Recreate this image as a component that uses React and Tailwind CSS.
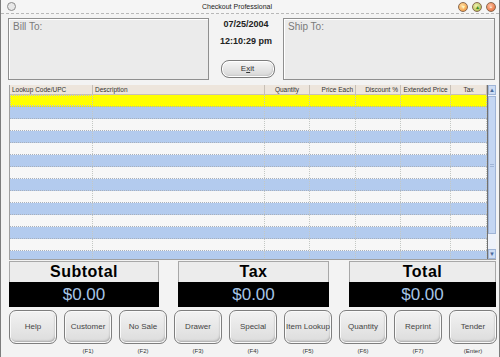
import React from "react";

const columns = [
  { label: "Lookup Code/UPC", align: "text-left pl-[2px]" },
  { label: "Description", align: "text-left pl-[2px]" },
  { label: "Quantity", align: "text-center" },
  { label: "Price Each", align: "text-right pr-[2px]" },
  { label: "Discount %", align: "text-right pr-[2px]" },
  { label: "Extended Price", align: "text-center" },
  { label: "Tax", align: "text-center" },
];

const buttons = [
  { label: "Help", key: "" },
  { label: "Customer", key: "(F1)" },
  { label: "No Sale", key: "(F2)" },
  { label: "Drawer", key: "(F3)" },
  { label: "Special", key: "(F4)" },
  { label: "Item Lookup", key: "(F5)" },
  { label: "Quantity", key: "(F6)" },
  { label: "Reprint", key: "(F7)" },
  { label: "Tender", key: "(Enter)" },
];

const rows = Array.from({ length: 14 }, (_, i) => i);

const rowColor = (i) => {
  if (i === 0) return "bg-[#ffff00]";
  return i % 2 === 1 ? "bg-[#b3cbee]" : "bg-[#f7f7f7]";
};

const Ball = ({ color, children }) => (
  <div
    className={`w-[10px] h-[10px] rounded-full border border-[#8a6a50] flex items-center justify-center text-[6px] leading-none text-white ${color}`}
  >
    {children}
  </div>
);

const InfoBox = ({ label, className }) => (
  <div
    className={`h-[62px] border border-[#8f8f8f] bg-[#ebebeb] shadow-[inset_1px_1px_0_#fff] px-[4px] pt-[2px] text-[10px] leading-[12px] text-[#7a7a7a] ${className}`}
  >
    {label}
  </div>
);

const TotalPanel = ({ title, className }) => (
  <div className={`flex flex-col ${className}`}>
    <div className="h-[21px] bg-[#ececec] border-t border-l border-r border-[#a8a8a8] flex items-center justify-center">
      <span className="text-[16px] font-bold tracking-[0.5px] text-black leading-none">
        {title}
      </span>
    </div>
    <div className="h-[25px] bg-black flex items-center justify-center">
      <span className="text-[17px] text-[#a6c4e6] leading-none">$0.00</span>
    </div>
  </div>
);

export default function App() {
  return (
    <div
      className="w-[500px] h-[357px] bg-[#f3f3f3] border-l border-r border-[#7d7d7d] flex flex-col overflow-hidden"
      style={{ fontFamily: '"Liberation Sans", Arial, sans-serif' }}
    >
      {/* title bar */}
      <div className="h-[14px] shrink-0 flex items-center px-[3px] border-b border-dashed border-[#b8b8b8] bg-[#f5f5f5]">
        <div className="w-[9px] h-[9px] rounded-full border border-[#8a8a8a] bg-[#e8e8e8] ml-[3px]" />
        <div className="flex-1 text-center text-[7px] leading-[14px] text-[#222]">
          Checkout Professional
        </div>
        <div className="flex gap-[4px] items-center">
          <Ball color="bg-[radial-gradient(circle_at_40%_35%,#ffe0a0,#f08a30)]">
            <span className="text-[#fff6c0]">▾</span>
          </Ball>
          <Ball color="bg-[radial-gradient(circle_at_40%_35%,#f2f2b0,#9ab040)]">
            <span className="text-[#3c8c20]">▴</span>
          </Ball>
          <Ball color="bg-[radial-gradient(circle_at_40%_35%,#ffc0a0,#e0602a)]">
            <span className="text-[#fff0e0]">•</span>
          </Ball>
        </div>
      </div>

      {/* bill / ship */}
      <div className="mt-[4px] flex pl-[7px] pr-[4px] shrink-0">
        <InfoBox label="Bill To:" className="w-[201px]" />
        <div className="w-[74px] flex flex-col items-center">
          <div className="mt-[1px] h-[11px] text-[9px] font-bold text-[#222] leading-[11px]">
            07/25/2004
          </div>
          <div className="mt-[6px] h-[11px] text-[9px] font-bold text-[#222] leading-[11px]">
            12:10:29 pm
          </div>
          <div className="mt-[13px] ml-[3px] w-[54px] h-[18px] rounded-[8px] border border-[#7c7c7c] bg-[linear-gradient(#f6f6f6,#d6d6d6)] shadow-[inset_0_0_0_1px_#fff,inset_-1px_-1px_2px_#aaa] flex items-center justify-center text-[8px] leading-none text-[#333]">
            E<span className="underline">x</span>it
          </div>
        </div>
        <InfoBox label="Ship To:" className="flex-1" />
      </div>

      {/* grid */}
      <div className="mt-[5px] ml-[8px] mr-[3px] h-[175px] flex shrink-0 border-l border-b border-[#a0a0a0] overflow-hidden">
        <div className="w-[477px] flex flex-col">
          <div className="h-[10px] shrink-0 grid grid-cols-[83px_172px_45px_46px_45px_50px_36px] bg-[#ede5dc] border-b border-[#c8c0b8]">
            {columns.map((c) => (
              <div
                key={c.label}
                className={`border-r border-[#c6beb5] text-[6.5px] leading-[9px] text-[#333] whitespace-nowrap overflow-hidden ${c.align}`}
              >
                {c.label}
              </div>
            ))}
          </div>
          {rows.map((r) => (
            <div
              key={r}
              className={`h-[12px] shrink-0 grid grid-cols-[83px_172px_45px_46px_45px_50px_36px] border-b border-dotted border-[#a8b0bc] ${rowColor(r)}`}
            >
              {columns.map((c, ci) => (
                <div
                  key={c.label}
                  className={`border-r border-dotted border-[#c4c8c4] ${
                    r === 0 && ci === 0 ? "border border-dotted border-[#777]" : ""
                  }`}
                />
              ))}
            </div>
          ))}
        </div>
        {/* scrollbar */}
        <div className="w-[12px] flex flex-col bg-[#eef2fa] border-l border-[#707070]">
          <div className="h-[10px] bg-[#cddcf3] border border-[#9fb4d6] flex items-center justify-center text-[6px] text-[#4a6a9a] leading-none">
            ▲
          </div>
          <div className="h-[138px] mt-[1px] bg-[#c4d6f2] border border-[#9fb4d6] flex items-center justify-center">
            <div className="w-[4px] h-[3px] border-t border-b border-[#9fb4d6]" />
          </div>
          <div className="flex-1" />
          <div className="h-[10px] bg-[#cddcf3] border border-[#9fb4d6] flex items-center justify-center text-[6px] text-[#4a6a9a] leading-none">
            ▼
          </div>
        </div>
      </div>

      {/* totals */}
      <div className="mt-[1px] flex pl-[8px] shrink-0">
        <TotalPanel title="Subtotal" className="w-[150px]" />
        <TotalPanel title="Tax" className="w-[151px] ml-[19px]" />
        <TotalPanel title="Total" className="w-[147px] ml-[20px]" />
      </div>

      {/* buttons */}
      <div className="mt-[3px] flex gap-[7px] pl-[8px] shrink-0">
        {buttons.map((b) => (
          <div key={b.label} className="w-[48px] flex flex-col items-center">
            <div className="w-[48px] h-[34px] rounded-[7px] border border-[#7e7e7e] bg-[linear-gradient(#f2f2f2,#dcdcdc)] shadow-[inset_0_0_0_1px_#fafafa,inset_-1px_-2px_2px_#a8a8a8] flex items-center justify-center text-[8px] leading-none text-[#444] whitespace-nowrap">
              {b.label}
            </div>
            <div className="mt-[1px] h-[12px] text-[6px] leading-[12px] text-[#333]">
              {b.key}
            </div>
          </div>
        ))}
      </div>
    </div>
  );
}
